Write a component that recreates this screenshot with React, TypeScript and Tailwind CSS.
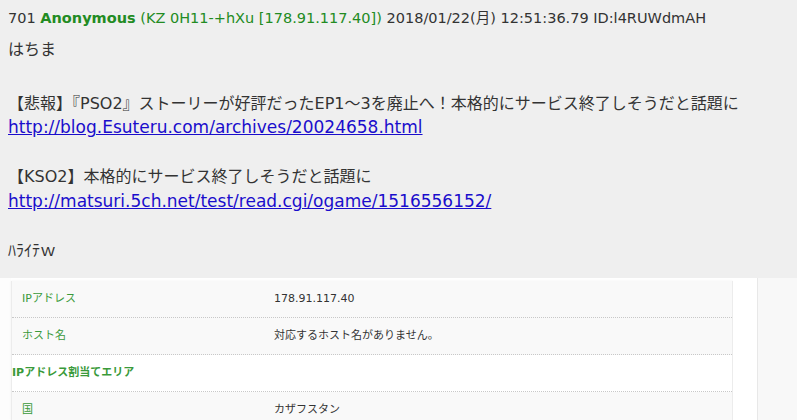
const FONT = "font-['DejaVu_Sans','Noto_Sans_CJK_JP',sans-serif]";

const rows = [
  { label: "IPアドレス", value: "178.91.117.40" },
  { label: "ホスト名", value: "対応するホスト名がありません。" },
];

export default function App() {
  return (
    <div className={`${FONT} h-[420px] w-[797px] overflow-hidden bg-white text-[#333]`}>
      <div className="h-[278px] bg-[#efefef] px-2 pt-[8px]">
        <div className="text-[14.5px] leading-[20px] whitespace-nowrap text-[#333]">
          701 <b className="text-[#228b22]">Anonymous</b>{" "}
          <span className="text-[#228b22]">(KZ 0H11-+hXu [178.91.117.40])</span> 2018/01/22(月) 12:51:36.79
          ID:l4RUWdmAH
        </div>
        <div className="mt-[10px] text-[16px] leading-[24.7px]">
          <p>はちま</p>
          <p className="mt-[29px]">【悲報】『PSO2』ストーリーが好評だったEP1～3を廃止へ！本格的にサービス終了しそうだと話題に</p>
          <p className="-mt-px">
            <a href="#" className="text-[17px] text-[#1a0dcc] underline">
              http://blog.Esuteru.com/archives/20024658.html
            </a>
          </p>
          <p className="mt-[24px]">【KSO2】本格的にサービス終了しそうだと話題に</p>
          <p className="-mt-px">
            <a href="#" className="text-[17px] text-[#1a0dcc] underline">
              http://matsuri.5ch.net/test/read.cgi/ogame/1516556152/
            </a>
          </p>
          <p className="mt-[24px]">ﾊﾗｲﾃｗ</p>
        </div>
      </div>
      <div className="flex h-[142px]">
        <div className="w-[11px] bg-[#fdfdfd]" />
        <div className="mt-[3px] w-[722px] border-l border-r border-[#ececec] bg-[#f9f9f9] text-[11px] shadow-[0_0_2px_rgba(0,0,0,0.06)]">
          {rows.map((r) => (
            <div key={r.label} className="flex h-[37px] items-center border-b border-dotted border-[#c8c8c8]">
              <div className="w-[262px] pl-[10px] text-[#3a9a3a]">{r.label}</div>
              <div className="text-[#333]">{r.value}</div>
            </div>
          ))}
          <div className="flex h-[37px] items-center border-b border-dotted border-[#c8c8c8] bg-white pl-0 font-bold text-[#3a9a3a]">
            IPアドレス割当てエリア
          </div>
          <div className="flex h-[36px] items-center">
            <div className="w-[262px] pl-[10px] text-[#3a9a3a]">国</div>
            <div className="text-[#333]">カザフスタン</div>
          </div>
        </div>
        <div className="w-[24px] bg-white" />
        <div className="flex-1 border-l border-[#e8e8e8] bg-[#f8f8f8]" />
      </div>
    </div>
  );
}
